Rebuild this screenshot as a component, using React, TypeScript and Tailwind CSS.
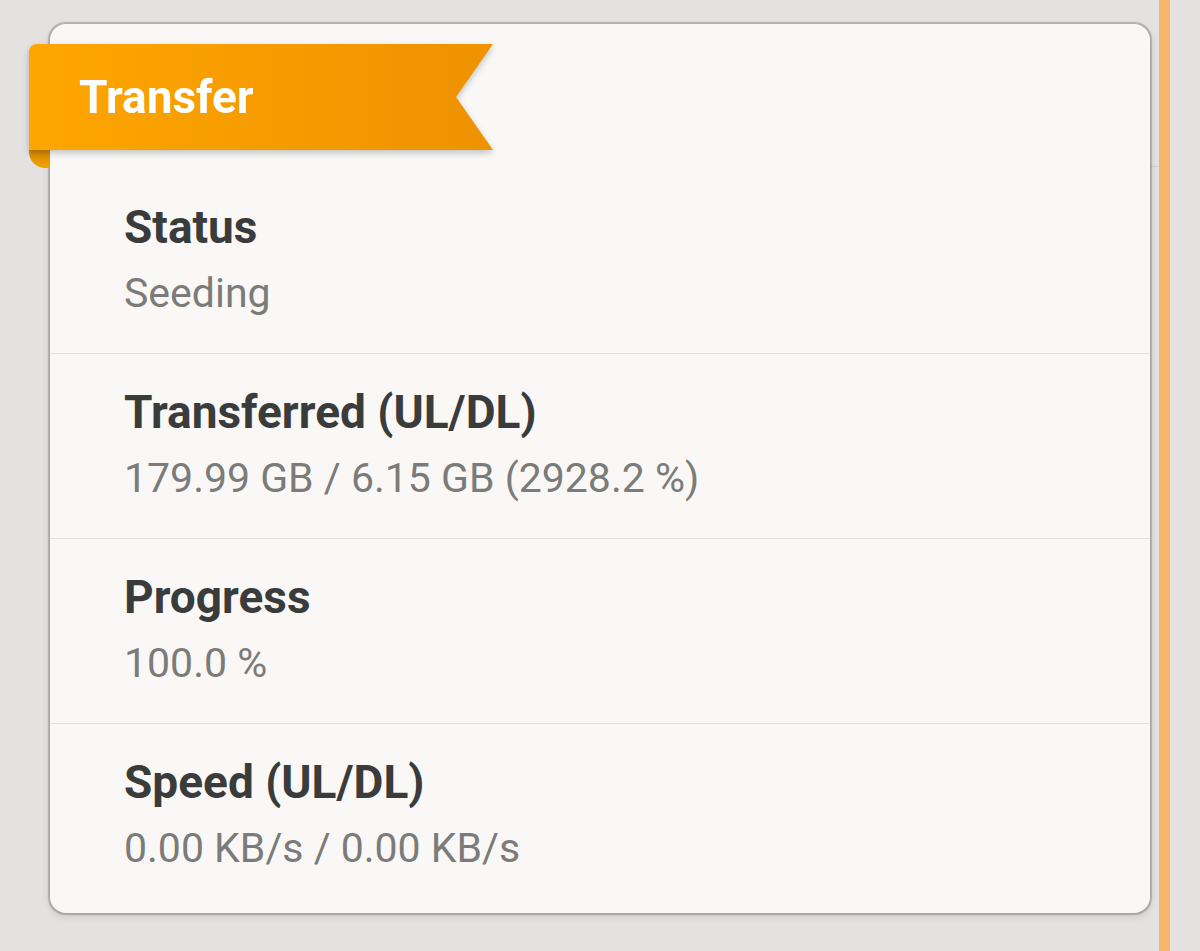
import React from "react";

interface Field {
  label: string;
  value: string;
}

const fields: Field[] = [
  { label: "Status", value: "Seeding" },
  { label: "Transferred (UL/DL)", value: "179.99 GB / 6.15 GB (2928.2 %)" },
  { label: "Progress", value: "100.0 %" },
  { label: "Speed (UL/DL)", value: "0.00 KB/s / 0.00 KB/s" },
];

function Ribbon({ title }: { title: string }) {
  return (
    <div className="absolute left-[-21px] top-[20px] z-10">
      {/* folded end wrapping round the card edge */}
      <div className="absolute left-0 top-[94px] h-[30px] w-[21px] rounded-bl-[16px] bg-gradient-to-b from-[#b57500] via-[#d98c00] to-[#f3a300]" />
      <div className="relative [filter:drop-shadow(0_3px_3px_rgba(0,0,0,0.22))]">
        <div className="flex h-[106px] w-[464px] items-center rounded-tl-[8px] bg-gradient-to-r from-[#fea600] to-[#ee9200] pl-[50px] [clip-path:polygon(0_0,100%_0,calc(100%-37px)_50%,100%_100%,0_100%)]">
          <span className="text-[46px] font-bold leading-none text-white">{title}</span>
        </div>
      </div>
    </div>
  );
}

export default function App() {
  return (
    <div
      className="flex h-[951px] w-full overflow-hidden bg-[#e3e2e0]"
      style={{ fontFamily: "Roboto, 'Noto Sans', sans-serif" }}
    >
      <div className="relative w-[1159px] shrink-0">
        {/* divider of the page behind the card */}
        <div className="absolute right-0 top-[166px] h-px w-[20px] bg-[#cfcecc]" />

        <div className="relative ml-[50px] mt-[24px] w-[1100px] rounded-[16px] bg-[#f9f8f6] shadow-[0_0_1px_1.5px_rgba(0,0,0,0.2),0_3px_8px_rgba(0,0,0,0.12)]">
          <Ribbon title="Transfer" />

          {fields.map((f, i) => (
            <div
              key={f.label}
              className={
                i === 0
                  ? "pl-[74px] pt-[180px] pb-[39px]"
                  : i === fields.length - 1
                  ? "border-t border-[#e2e1df] pl-[74px] pt-[35px] pb-[44px]"
                  : "border-t border-[#e2e1df] pl-[74px] pt-[35px] pb-[39px]"
              }
            >
              <div className="text-[46px] font-bold leading-none text-[#3a3c3b]">{f.label}</div>
              <div className="mt-[23px] text-[41px] leading-none text-[#7b7b79]">{f.value}</div>
            </div>
          ))}
        </div>
      </div>
      <div className="w-[11px] shrink-0 bg-[#f4b66b]" />
    </div>
  );
}
